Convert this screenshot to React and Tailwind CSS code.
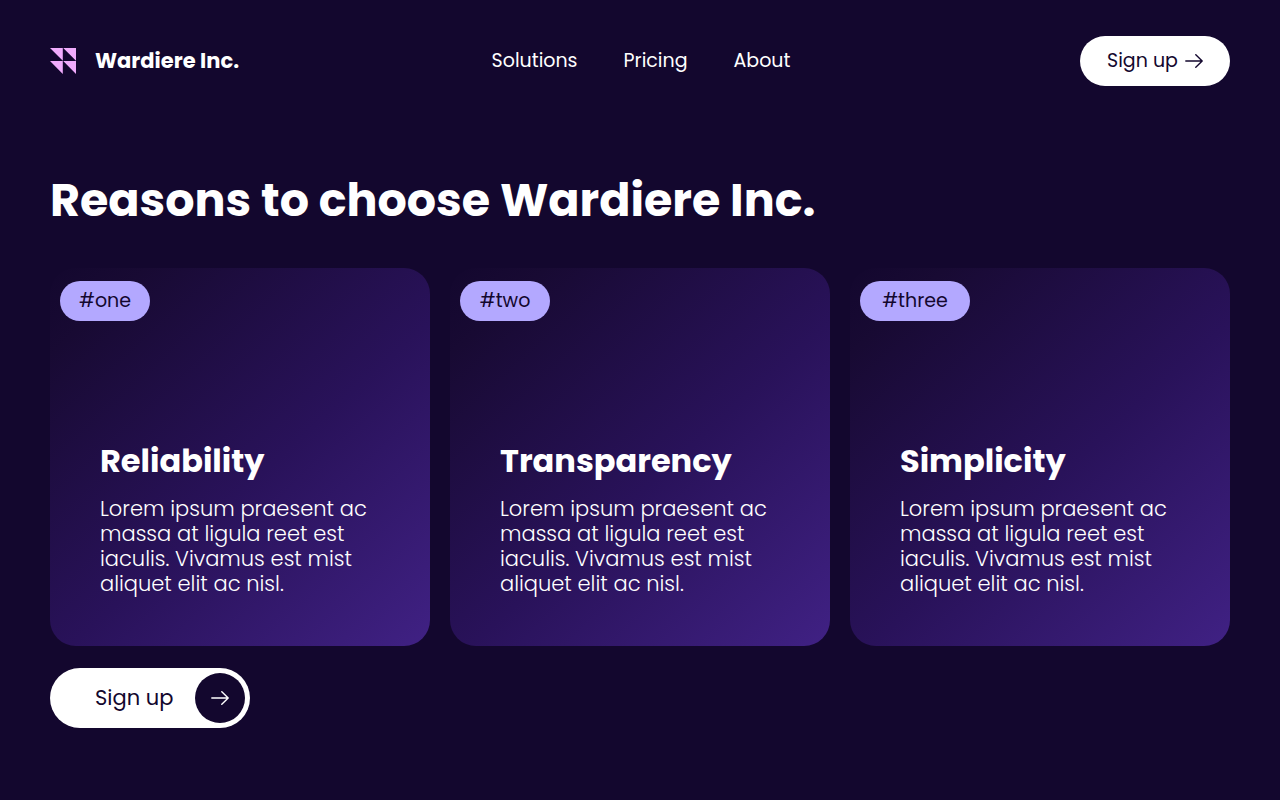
const NAV_LINKS = ['Solutions', 'Pricing', 'About'];

const REASON_TEXT =
  'Lorem ipsum praesent ac massa at ligula reet est iaculis. Vivamus est mist aliquet elit ac nisl.';

const REASONS = [
  { tag: '#one', tagWidth: 'w-[90px]', title: 'Reliability' },
  { tag: '#two', tagWidth: 'w-[90px]', title: 'Transparency' },
  { tag: '#three', tagWidth: 'w-[110px]', title: 'Simplicity' },
];

function Logo() {
  return (
    <svg viewBox="0 0 26 26" className="size-[26px]" fill="#f0abfc" aria-hidden="true">
      <path d="M0 0H12.8V12.8ZM13.2 0H26V12.8ZM0 13H12.8V26ZM13.2 13H26V26Z" />
    </svg>
  );
}

function Arrow() {
  return (
    <svg
      viewBox="0 0 18 14"
      className="h-[14px] w-[18px]"
      fill="none"
      stroke="currentColor"
      strokeWidth="1.4"
      strokeLinecap="round"
      strokeLinejoin="round"
      aria-hidden="true"
    >
      <path d="M0.8 7H17.2M10.8 0.7L17.2 7L10.8 13.3" />
    </svg>
  );
}

function ReasonCard({ tag, tagWidth, title }) {
  return (
    <article className="flex min-h-[378px] flex-col justify-between rounded-[26px] bg-linear-[138deg,#13072e_0%,#180a33_12%,#29125a_55%,#402184_100%] pt-[13px] pb-[50px]">
      <span
        className={`ml-[10px] flex h-10 items-center justify-center rounded-full bg-[#b3a8ff] text-[19px] text-[#13072e] ${tagWidth}`}
      >
        {tag}
      </span>
      <div className="pr-10 pl-[50px]">
        <h2 className="text-[32px] leading-10 font-bold text-white">{title}</h2>
        <p className="mt-[15px] max-w-[290px] text-[21px] leading-[25px] font-light text-white">
          {REASON_TEXT}
        </p>
      </div>
    </article>
  );
}

export default function App() {
  return (
    <div className="min-h-screen bg-[#13072e] px-[50px] pt-9 pb-[72px] font-['Poppins','Inter',sans-serif] text-white">
      <header className="grid grid-cols-[1fr_auto_1fr] items-center">
        <a href="#home" className="flex items-center gap-[19px] text-[21px] font-bold">
          <Logo />
          Wardiere Inc.
        </a>
        <nav className="flex gap-[46px] pl-[2px] text-[19px]">
          {NAV_LINKS.map((label) => (
            <a key={label} href={`#${label.toLowerCase()}`}>
              {label}
            </a>
          ))}
        </nav>
        <button
          type="button"
          className="flex h-[50px] w-[150px] items-center justify-center gap-[7px] justify-self-end rounded-full bg-white text-[19px] text-[#13072e]"
        >
          Sign up
          <Arrow />
        </button>
      </header>

      <main>
        <h1 className="mt-[84px] text-[46px] leading-[60px] font-bold">
          Reasons to choose Wardiere Inc.
        </h1>
        <section className="mt-[38px] grid grid-cols-3 gap-5">
          {REASONS.map((reason) => (
            <ReasonCard key={reason.tag} {...reason} />
          ))}
        </section>
        <button
          type="button"
          className="mt-[22px] flex h-[60px] w-[200px] items-center justify-between rounded-full bg-white pr-[5px] pl-[45px] text-[21px] text-[#13072e]"
        >
          Sign up
          <span className="flex size-[50px] items-center justify-center rounded-full bg-[#13072e] text-white">
            <Arrow />
          </span>
        </button>
      </main>
    </div>
  );
}
